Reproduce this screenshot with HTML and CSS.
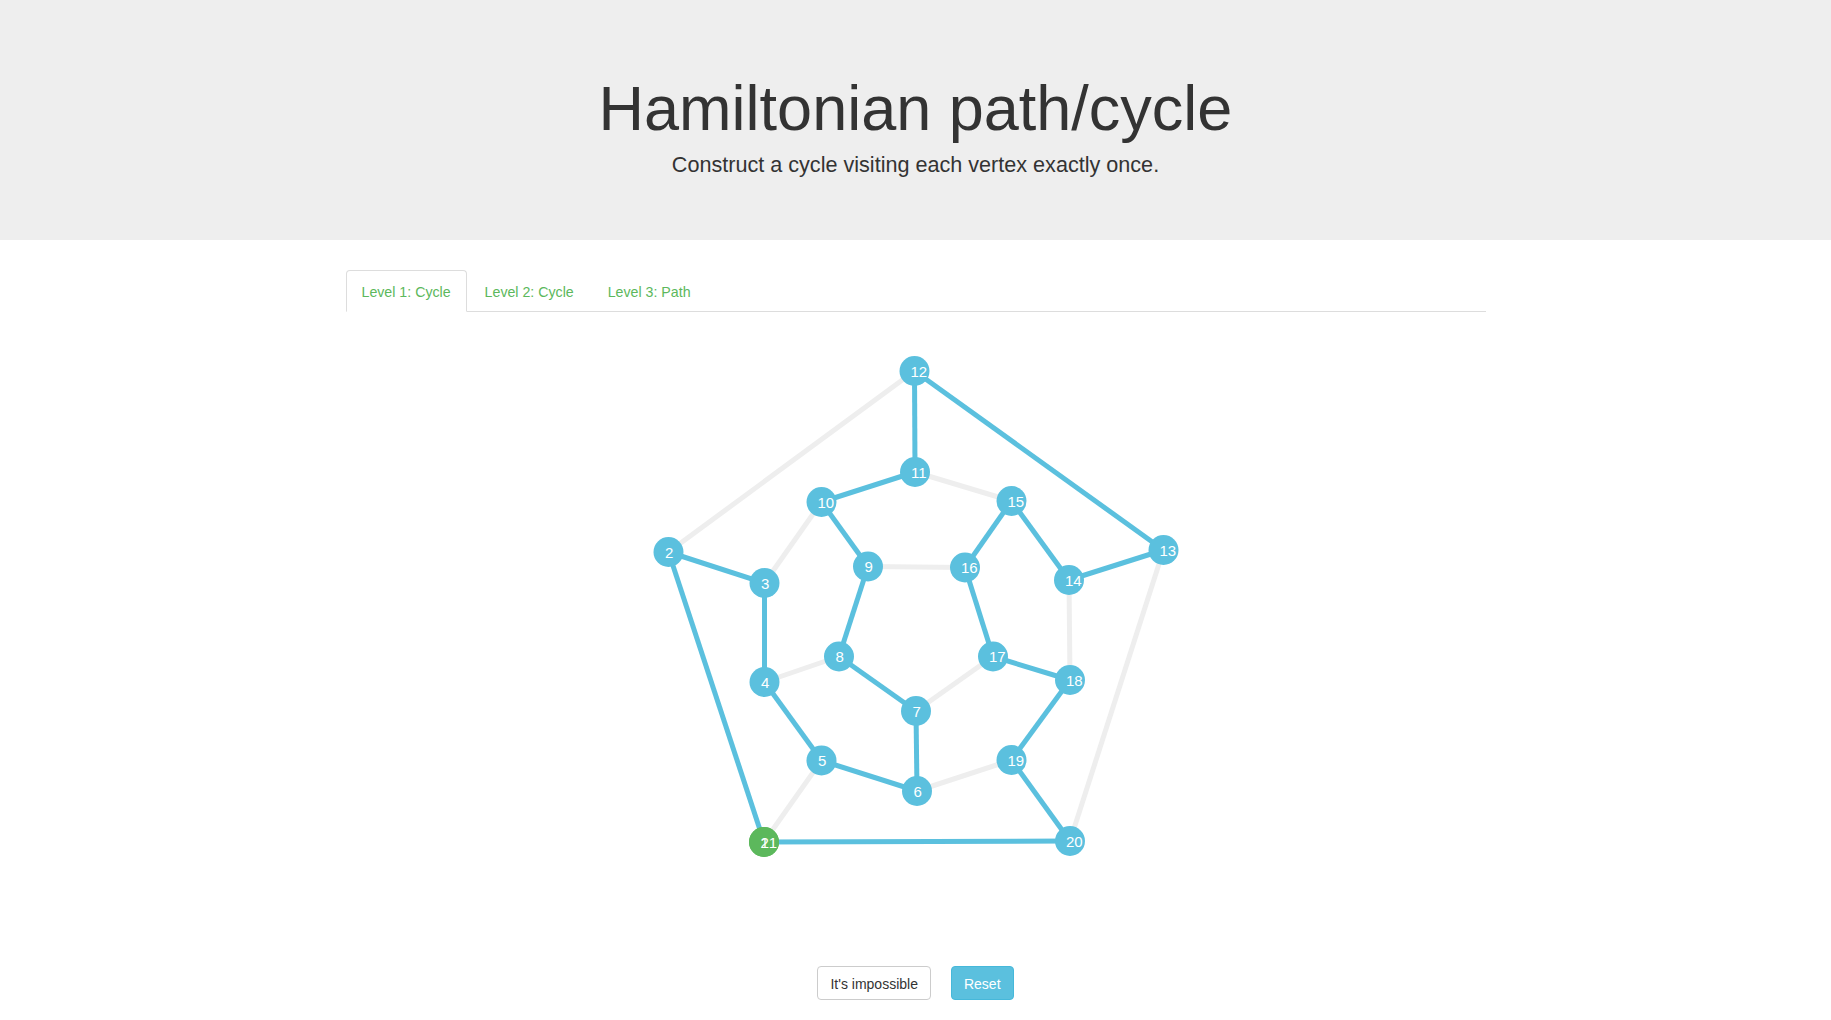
FILE: index.html
```html
<!DOCTYPE html>
<html lang="en">
<head>
<meta charset="utf-8">
<title>Hamiltonian path/cycle</title>
<link rel="stylesheet" href="styles.css">
</head>
<body>
<div class="jumbotron">
  <div class="container">
    <h1>Hamiltonian path/cycle</h1>
    <p>Construct a cycle visiting each vertex exactly once.</p>
  </div>
</div>
<div class="container">
  <ul class="nav-tabs">
    <li class="active"><a href="#">Level 1: Cycle</a></li>
    <li><a href="#">Level 2: Cycle</a></li>
    <li><a href="#">Level 3: Path</a></li>
  </ul>
  <svg class="graph" width="1140" height="634" viewBox="345.5 312 1140 634" xmlns="http://www.w3.org/2000/svg">
    <g class="edges">
      <line class="edge" x1="914" y1="371" x2="668" y2="552"/>
      <line class="edge" x1="1163" y1="550" x2="1069.5" y2="841"/>
      <line class="edge" x1="914.5" y1="472" x2="1011" y2="501"/>
      <line class="edge" x1="1068.5" y1="580" x2="1069.5" y2="680"/>
      <line class="edge" x1="1011" y1="760" x2="916.5" y2="791"/>
      <line class="edge" x1="764" y1="583" x2="821" y2="502"/>
      <line class="edge" x1="763.5" y1="842" x2="821" y2="760.5"/>
      <line class="edge" x1="867.5" y1="566.5" x2="964.5" y2="567.5"/>
      <line class="edge" x1="992.5" y1="656.5" x2="915.5" y2="711"/>
      <line class="edge" x1="764" y1="682" x2="838.5" y2="656.5"/>

      <line class="edge on" x1="763.5" y1="842" x2="668" y2="552"/>
      <line class="edge on" x1="668" y1="552" x2="764" y2="583"/>
      <line class="edge on" x1="764" y1="583" x2="764" y2="682"/>
      <line class="edge on" x1="764" y1="682" x2="821" y2="760.5"/>
      <line class="edge on" x1="821" y1="760.5" x2="916.5" y2="791"/>
      <line class="edge on" x1="916.5" y1="791" x2="915.5" y2="711"/>
      <line class="edge on" x1="915.5" y1="711" x2="838.5" y2="656.5"/>
      <line class="edge on" x1="838.5" y1="656.5" x2="867.5" y2="566.5"/>
      <line class="edge on" x1="867.5" y1="566.5" x2="821" y2="502"/>
      <line class="edge on" x1="821" y1="502" x2="914.5" y2="472"/>
      <line class="edge on" x1="914.5" y1="472" x2="914" y2="371"/>
      <line class="edge on" x1="914" y1="371" x2="1163" y2="550"/>
      <line class="edge on" x1="1163" y1="550" x2="1068.5" y2="580"/>
      <line class="edge on" x1="1068.5" y1="580" x2="1011" y2="501"/>
      <line class="edge on" x1="1011" y1="501" x2="964.5" y2="567.5"/>
      <line class="edge on" x1="964.5" y1="567.5" x2="992.5" y2="656.5"/>
      <line class="edge on" x1="992.5" y1="656.5" x2="1069.5" y2="680"/>
      <line class="edge on" x1="1069.5" y1="680" x2="1011" y2="760"/>
      <line class="edge on" x1="1011" y1="760" x2="1069.5" y2="841"/>
      <line class="edge on" x1="1069.5" y1="841" x2="763.5" y2="842"/>
    </g>
    <g class="nodes">
      <circle class="node start" cx="763.5" cy="842" r="15"/>
      <circle class="node" cx="668" cy="552" r="15"/>
      <circle class="node" cx="764" cy="583" r="15"/>
      <circle class="node" cx="764" cy="682" r="15"/>
      <circle class="node" cx="821" cy="760.5" r="15"/>
      <circle class="node" cx="916.5" cy="791" r="15"/>
      <circle class="node" cx="915.5" cy="711" r="15"/>
      <circle class="node" cx="838.5" cy="656.5" r="15"/>
      <circle class="node" cx="867.5" cy="566.5" r="15"/>
      <circle class="node" cx="821" cy="502" r="15"/>
      <circle class="node" cx="914.5" cy="472" r="15"/>
      <circle class="node" cx="914" cy="371" r="15"/>
      <circle class="node" cx="1163" cy="550" r="15"/>
      <circle class="node" cx="1068.5" cy="580" r="15"/>
      <circle class="node" cx="1011" cy="501" r="15"/>
      <circle class="node" cx="964.5" cy="567.5" r="15"/>
      <circle class="node" cx="992.5" cy="656.5" r="15"/>
      <circle class="node" cx="1069.5" cy="680" r="15"/>
      <circle class="node" cx="1011" cy="760" r="15"/>
      <circle class="node" cx="1069.5" cy="841" r="15"/>
      <circle class="node start" cx="763.5" cy="842" r="15"/>
    </g>
    <g class="labels">
      <text x="760" y="847.5">1</text>
      <text x="664.5" y="557.5">2</text>
      <text x="760.5" y="588.5">3</text>
      <text x="760.5" y="687.5">4</text>
      <text x="817.5" y="766">5</text>
      <text x="913" y="796.5">6</text>
      <text x="912" y="716.5">7</text>
      <text x="835" y="662">8</text>
      <text x="864" y="572">9</text>
      <text x="817" y="507.5">10</text>
      <text x="910.5" y="477.5">11</text>
      <text x="910" y="376.5">12</text>
      <text x="1159" y="555.5">13</text>
      <text x="1064.5" y="585.5">14</text>
      <text x="1007" y="506.5">15</text>
      <text x="960.5" y="573">16</text>
      <text x="988.5" y="662">17</text>
      <text x="1065.5" y="685.5">18</text>
      <text x="1007" y="765.5">19</text>
      <text x="1065.5" y="846.5">20</text>
      <text x="760" y="847.5">21</text>
    </g>
  </svg>
  <div class="actions">
    <button class="btn btn-default" type="button">It's impossible</button>
    <button class="btn btn-info" type="button">Reset</button>
  </div>
</div>
</body>
</html>
```

FILE: styles.css
```css
html, body {
  margin: 0;
  padding: 0;
}

body {
  font-family: "Liberation Sans", Arial, sans-serif;
  font-size: 14px;
  line-height: 1.42857;
  color: #333;
  background: #fff;
}

.container {
  width: 1170px;
  margin: 0 auto;
  padding: 0 15px;
  box-sizing: border-box;
}

.jumbotron {
  background: #eee;
  padding: 48px 0 46px;
  margin-bottom: 30px;
  text-align: center;
}

.jumbotron h1 {
  font-size: 63px;
  font-weight: 500;
  line-height: 69px;
  margin: 26px 0 7px;
  color: #333;
}

.jumbotron p {
  font-size: 21.6px;
  font-weight: 200;
  line-height: 30px;
  margin: 0 0 14px;
}

.nav-tabs {
  list-style: none;
  margin: 0;
  padding: 0;
  display: flex;
  border-bottom: 1px solid #ddd;
}

.nav-tabs li {
  margin-bottom: -1px;
}

.nav-tabs a {
  display: block;
  padding: 11px 15px 9px;
  font-size: 14.2px;
  line-height: 20px;
  margin-right: 2px;
  border: 1px solid transparent;
  border-radius: 4px 4px 0 0;
  color: #5cb85c;
  text-decoration: none;
}

.nav-tabs li.active a {
  background: #fff;
  border-color: #ddd #ddd transparent;
}

.graph {
  display: block;
}

.edge {
  stroke: #eeeeee;
  stroke-width: 5;
}

.edge.on {
  stroke: #5bc0de;
}

.node {
  fill: #5bc0de;
}

.node.start {
  fill: #5cb85c;
}

.labels text {
  fill: #fff;
  font-family: "Liberation Sans", Arial, sans-serif;
  font-size: 15px;
}

.actions {
  display: flex;
  justify-content: center;
  gap: 20px;
  margin-top: 20px;
}

.btn {
  font-family: "Liberation Sans", Arial, sans-serif;
  font-size: 14px;
  line-height: 20px;
  padding: 7px 12px 5px;
  border: 1px solid transparent;
  border-radius: 4px;
  cursor: pointer;
}

.btn-default {
  background: #fff;
  border-color: #ccc;
  color: #333;
}

.btn-info {
  background: #5bc0de;
  border-color: #46b8da;
  color: #fff;
}
```
